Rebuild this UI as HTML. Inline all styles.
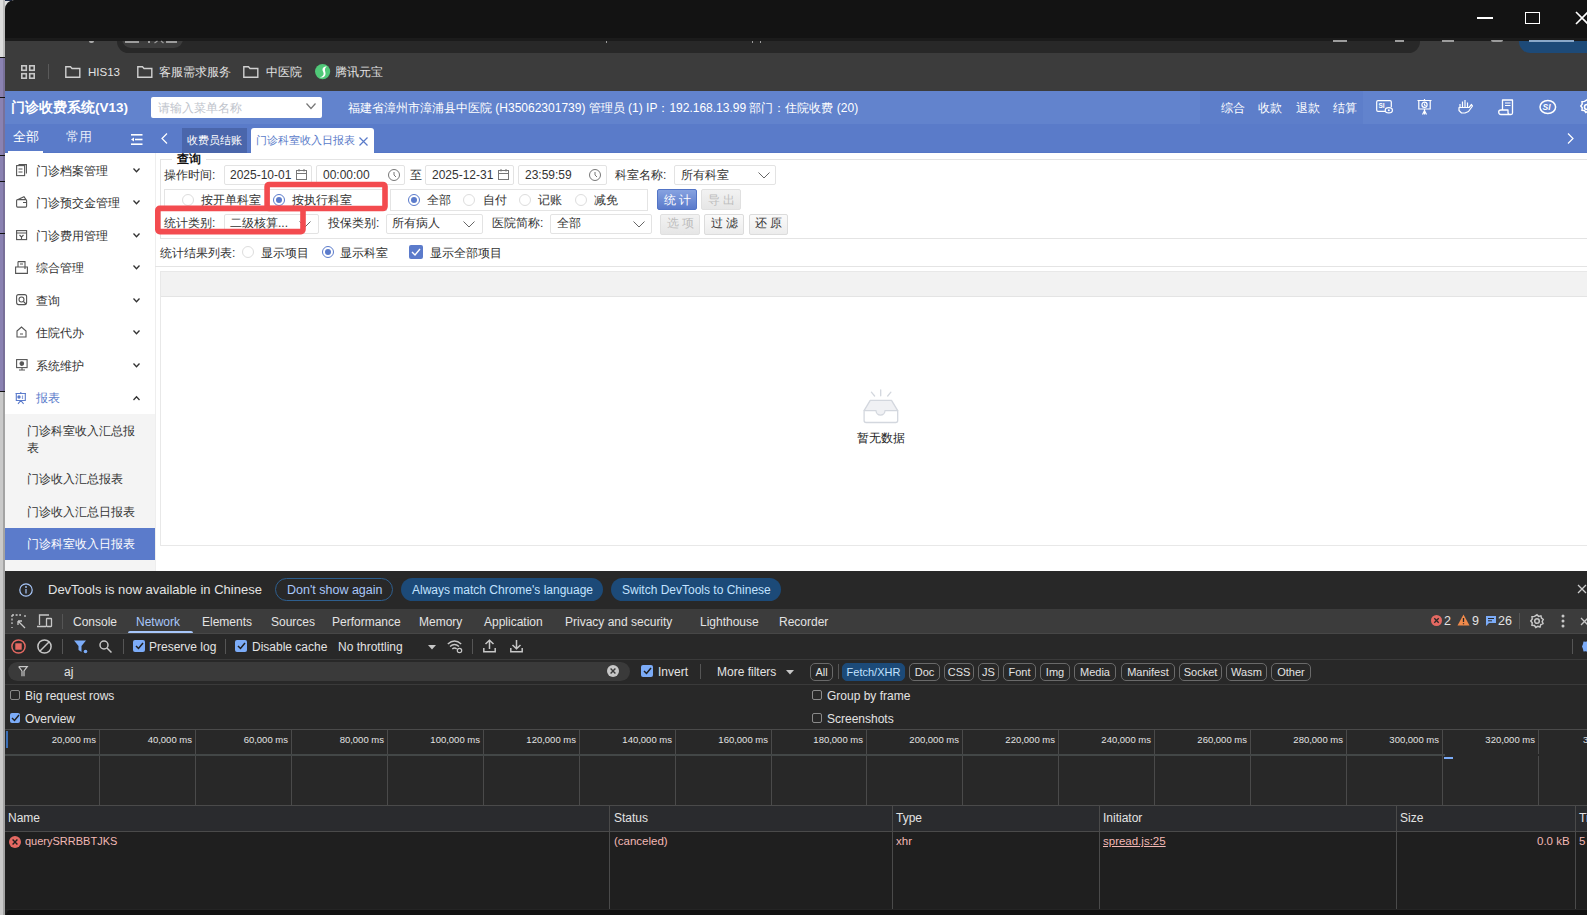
<!DOCTYPE html>
<html><head><meta charset="utf-8">
<style>
*{margin:0;padding:0;box-sizing:border-box}
html,body{width:1587px;height:915px;overflow:hidden;background:#1f1f1f;font-family:"Liberation Sans",sans-serif;position:relative}
.a{position:absolute}
.t{position:absolute;white-space:nowrap;line-height:1}
svg{position:absolute;overflow:visible}
.bm{color:#e3e3e3;font-size:11.5px;top:67px}
.hd{color:#fff;font-size:12px;top:102px}
.sb{color:#333;font-size:12px}
.lab{color:#333;font-size:12px}
.inp{position:absolute;background:#fff;border:1px solid #e3e3e3;border-radius:2px}
.dv{color:#e3e3e3;font-size:12px}
.chip{position:absolute;top:663px;height:18px;border:1px solid #6a6a6a;border-radius:5px;color:#e3e3e3;font-size:11px;line-height:16px;text-align:center}
.vl{position:absolute;width:1px;background:#4a4a4a}
</style></head><body>
<!-- left strip -->
<div class="a" style="left:0;top:0;width:20px;height:20px;background:#dedede"></div>
<div class="a" style="left:0;top:0;width:12px;height:1px;background:#1e2b48"></div>
<div class="a" style="left:0;top:0;width:5px;height:57px;background:#dcdcdc"></div>
<div class="a" style="left:3px;top:0;width:2px;height:57px;background:#bdbdbd"></div>
<div class="a" style="left:0;top:57px;width:5px;height:334px;background:#8a82b2"></div>
<div class="a" style="left:3px;top:57px;width:2px;height:334px;background:#787099"></div>
<div class="a" style="left:0;top:57px;width:5px;height:1px;background:#111"></div>
<div class="a" style="left:0;top:97px;width:5px;height:1px;background:#111"></div>
<div class="a" style="left:0;top:155px;width:5px;height:1px;background:#111"></div>
<div class="a" style="left:0;top:181px;width:5px;height:1px;background:#111"></div>
<div class="a" style="left:0;top:233px;width:5px;height:1px;background:#111"></div>
<div class="a" style="left:0;top:391px;width:5px;height:1px;background:#111"></div>
<div class="a" style="left:0;top:392px;width:5px;height:523px;background:#c9c9c9"></div>
<div class="a" style="left:3px;top:392px;width:2px;height:523px;background:#a3a3a3"></div>
<!-- address row -->
<div class="a" style="left:5px;top:38px;width:1582px;height:53px;background:#3c3c3c"></div>
<div class="a" style="left:117px;top:30px;width:1303px;height:23px;background:#282828;border-radius:12px"></div>
<div class="a" style="left:122px;top:30px;width:61px;height:18px;background:#3c3c3c;border-radius:9px"></div>
<div class="a" style="left:1519px;top:30px;width:80px;height:23px;background:#1d4a78;border-radius:12px"></div>
<!-- title bar -->
<div class="a" style="left:5px;top:0;width:1582px;height:38px;background:#131313;border-top-left-radius:9px"></div>
<div class="a" style="left:5px;top:38px;width:1582px;height:3px;background:#1b1b1b"></div>
<div class="a" style="left:1477px;top:17px;width:16px;height:2px;background:#fff"></div>
<div class="a" style="left:1525px;top:12px;width:15px;height:12px;border:1.6px solid #fff"></div>
<svg style="left:1575px;top:11px" width="14" height="14"><path d="M1 1 L13 13 M13 1 L1 13" stroke="#fff" stroke-width="1.6"/></svg>
<!-- address fragments -->
<div class="a" style="left:125px;top:41px;width:14px;height:1.5px;background:#9c9c9c"></div>
<div class="a" style="left:148px;top:41px;width:2px;height:2px;background:#9c9c9c"></div>
<svg style="left:154px;top:40px" width="12" height="4"><path d="M0.5 3 L3.5 1 M7 1 L9.5 3" stroke="#9c9c9c" stroke-width="1.2"/></svg>
<div class="a" style="left:166px;top:41px;width:11px;height:1.5px;background:#9c9c9c"></div>
<div class="a" style="left:89px;top:41px;width:5px;height:2px;background:#aaa;border-radius:0 0 3px 3px"></div>
<div class="a" style="left:606px;top:41px;width:1px;height:2px;background:#9c9c9c"></div>
<div class="a" style="left:752px;top:41px;width:1px;height:2px;background:#9c9c9c"></div>
<div class="a" style="left:760px;top:41px;width:1px;height:2px;background:#9c9c9c"></div>
<div class="a" style="left:1333px;top:40px;width:14px;height:2px;background:#9c9c9c"></div>
<div class="a" style="left:1395px;top:40px;width:9px;height:2px;background:#9c9c9c"></div>
<div class="a" style="left:1442px;top:40px;width:12px;height:2px;background:#9c9c9c"></div>
<div class="a" style="left:1491px;top:40px;width:12px;height:2px;background:#9c9c9c;border-radius:0 0 6px 6px"></div>
<div class="a" style="left:1529px;top:40px;width:45px;height:2px;background:#8aa8c8"></div>
<!-- bookmarks -->
<svg style="left:21px;top:65px" width="14" height="14"><g fill="none" stroke="#c8c8c8" stroke-width="1.6"><rect x="0.8" y="0.8" width="4.5" height="4.5"/><rect x="8.7" y="0.8" width="4.5" height="4.5"/><rect x="0.8" y="8.7" width="4.5" height="4.5"/><rect x="8.7" y="8.7" width="4.5" height="4.5"/></g></svg>
<div class="a" style="left:48px;top:64px;width:1px;height:15px;background:#5a5a5a"></div>
<svg style="left:65px;top:66px" width="16" height="12"><path d="M0.8 0.8 H5.5 L7 2.5 H14.8 V11.2 H0.8 Z" fill="none" stroke="#d0d0d0" stroke-width="1.4"/></svg>
<div class="t bm" style="left:88px">HIS13</div>
<svg style="left:137px;top:66px" width="16" height="12"><path d="M0.8 0.8 H5.5 L7 2.5 H14.8 V11.2 H0.8 Z" fill="none" stroke="#d0d0d0" stroke-width="1.4"/></svg>
<div class="t bm" style="left:159px">客服需求服务</div>
<svg style="left:243px;top:66px" width="16" height="12"><path d="M0.8 0.8 H5.5 L7 2.5 H14.8 V11.2 H0.8 Z" fill="none" stroke="#d0d0d0" stroke-width="1.4"/></svg>
<div class="t bm" style="left:266px">中医院</div>
<svg style="left:315px;top:64px" width="16" height="16"><circle cx="7.6" cy="7.6" r="7.6" fill="#50c878"/><path d="M12 2.6 C8.2 2.2 6.6 5 8 7.6 C9.4 10.2 8.6 12.6 4.6 13.4 C8.4 14.4 11.4 11.6 10.3 8 C9.6 5.6 9.8 3.6 12 2.6Z" fill="#fff"/></svg>
<div class="t bm" style="left:335px">腾讯元宝</div>

<!-- app header -->
<div class="a" style="left:5px;top:91px;width:1582px;height:33px;background:#6283cd"></div>
<div class="a" style="left:1200px;top:91px;width:163px;height:33px;background:#5d7eca"></div>
<div class="a" style="left:5px;top:124px;width:1582px;height:29px;background:#5a7bc9"></div><div class="a" style="left:5px;top:152px;width:1582px;height:1px;background:#5576c6"></div>
<div class="t" style="left:11px;top:101px;color:#fff;font-size:13.5px;font-weight:bold">门诊收费系统(V13)</div>
<div class="a" style="left:151px;top:97px;width:171px;height:21px;background:#fff;border-radius:2px"></div>
<div class="t" style="left:158px;top:102px;color:#c0c4cc;font-size:12px">请输入菜单名称</div>
<svg style="left:306px;top:103px" width="10" height="7"><path d="M0.5 0.5 L5 5.5 L9.5 0.5" fill="none" stroke="#777" stroke-width="1.2"/></svg>
<div class="t hd" style="left:348px;font-size:12px">福建省漳州市漳浦县中医院 (H35062301739) 管理员 (1) IP：192.168.13.99 部门：住院收费 (20)</div>
<div class="t hd" style="left:1221px">综合</div>
<div class="t hd" style="left:1258px">收款</div>
<div class="t hd" style="left:1296px">退款</div>
<div class="t hd" style="left:1333px">结算</div>
<!-- header icons -->
<svg style="left:1376px;top:100px" width="18" height="14"><g fill="none" stroke="#fff" stroke-width="1.2"><path d="M9 11.3 H2 Q0.7 11.3 0.7 10 V2 Q0.7 0.7 2 0.7 H14 Q15.3 0.7 15.3 2 V7"/><ellipse cx="12.8" cy="10.3" rx="3.6" ry="2.6" fill="#6283cd"/><circle cx="12.8" cy="10.3" r="1" fill="#fff" stroke="none"/></g><text x="2.5" y="7.5" font-size="6.5" font-weight="bold" fill="#fff" font-family="Liberation Sans">SI</text></svg>
<svg style="left:1417px;top:99px" width="15" height="16"><g fill="none" stroke="#fff" stroke-width="1.2"><path d="M0.5 1.5 H14.5 M7.5 0 V1.5 M1.8 1.5 V10 H13.2 V1.5"/><circle cx="7.5" cy="5.8" r="2.6"/><path d="M7.5 4.5 V6 L8.6 6.8 M7.5 10 V15.5 M5.5 15.5 L7.5 11.5 L9.5 15.5"/></g></svg>
<svg style="left:1458px;top:99px" width="16" height="16"><g fill="none" stroke="#fff" stroke-width="1.2" stroke-linejoin="round"><path d="M2 8 V5 M4.5 8 V2.5 M7 8 V1 M9.5 8 V3.5"/><path d="M1 8.5 H11 L13.5 5.5 L14.5 7 L10.5 12.5 L7 14 H3.5 L1 11.5 Z"/></g></svg>
<svg style="left:1498px;top:99px" width="16" height="17"><g fill="none" stroke="#fff" stroke-width="1.3" stroke-linejoin="round"><path d="M4.5 11 V1 H14.5 V14 Q14.5 15.5 13 15.5 H3 Q0.7 15.5 0.7 13 Q0.7 11 3 11 H10 V13.5 Q10 15.5 12 15.5"/><path d="M7 4 H12.5 M7 6.5 H12.5" stroke-width="1.1"/></g></svg>
<svg style="left:1539px;top:99px" width="18" height="16"><ellipse cx="8.8" cy="8" rx="7.8" ry="6.6" fill="none" stroke="#fff" stroke-width="1.5"/><text x="3.6" y="11.2" font-size="8.5" font-weight="bold" fill="#fff" font-family="Liberation Sans" font-style="italic">SI</text></svg>
<svg style="left:1579px;top:99px" width="16" height="16"><g fill="none" stroke="#fff" stroke-width="1.5"><circle cx="8" cy="8" r="2.5"/><path d="M8 0.8 L9.6 2.4 L11.9 1.8 L12.5 4.1 L14.2 5.5 L13.2 7.5 L14 9.7 L11.8 10.6 L11 13 L8.8 12.3 L6.8 13.5 L5.5 11.5 L3 11.3 L3.2 8.8 L1.8 7 L3.2 5.1 L3 2.7 L5.5 2.4 Z"/></g></svg>
<!-- tabs row -->
<div class="t" style="left:13px;top:131px;color:#fff;font-size:12.5px">全部</div>
<div class="t" style="left:66px;top:131px;color:#e6ecf8;font-size:12.5px">常用</div>
<div class="a" style="left:8px;top:151px;width:35px;height:2px;background:#fff"></div>
<svg style="left:131px;top:134px" width="13" height="12"><g fill="#fff"><rect x="0" y="0" width="11.5" height="1.6"/><rect x="4" y="4.7" width="7.5" height="1.6"/><rect x="0" y="9.4" width="11.5" height="1.6"/><path d="M0 5.5 L3 3.5 V7.5Z"/></g></svg>
<svg style="left:161px;top:133px" width="7" height="11"><path d="M6 0.5 L1 5.5 L6 10.5" fill="none" stroke="#fff" stroke-width="1.2"/></svg>
<div class="a" style="left:182px;top:128px;width:65px;height:25px;background:#4a66ab"></div>
<div class="t" style="left:187px;top:135px;color:#fff;font-size:11px">收费员结账</div>
<div class="a" style="left:251px;top:128px;width:123px;height:26px;background:#fff;border-radius:3px 3px 0 0"></div>
<div class="t" style="left:256px;top:135px;color:#5a7bc9;font-size:11px">门诊科室收入日报表</div>
<svg style="left:359px;top:137px" width="9" height="9"><path d="M0.5 0.5 L8.5 8.5 M8.5 0.5 L0.5 8.5" stroke="#5a7bc9" stroke-width="1.2"/></svg>
<svg style="left:1567px;top:133px" width="7" height="11"><path d="M1 0.5 L6 5.5 L1 10.5" fill="none" stroke="#fff" stroke-width="1.2"/></svg>
<!-- content -->
<div class="a" style="left:5px;top:153px;width:1582px;height:418px;background:#fff"></div>
<!-- sidebar -->
<div class="a" style="left:5px;top:414px;width:150px;height:114px;background:#f4f4f4"></div>
<div class="a" style="left:5px;top:528px;width:150px;height:32px;background:#5b7bcb"></div>
<div class="a" style="left:5px;top:560px;width:150px;height:11px;background:#f4f4f4"></div>
<!-- sidebar items -->
<svg style="left:16px;top:164px" width="11" height="12"><g fill="none" stroke="#555" stroke-width="1.1"><rect x="0.6" y="1.6" width="8" height="10"/><path d="M2.5 0.6 H10.4 V9.5 M2.5 5 H6.5 M2.5 8 H6.5"/></g></svg>
<div class="t sb" style="left:36px;top:165px">门诊档案管理</div>
<svg style="left:16px;top:196px" width="12" height="12"><g fill="none" stroke="#555" stroke-width="1.1"><rect x="0.6" y="3.6" width="10" height="7.5" rx="1"/><path d="M2 3.5 L8 0.8 L10 3.5 M7 6.5 H11"/></g></svg>
<div class="t sb" style="left:36px;top:197px">门诊预交金管理</div>
<svg style="left:16px;top:229px" width="11" height="12"><g fill="none" stroke="#555" stroke-width="1.1"><rect x="0.6" y="1.6" width="10" height="9"/><path d="M0.6 4 H10.6 M3.5 6 L5.5 8 L7.5 6 M5.5 8 V10"/></g></svg>
<div class="t sb" style="left:36px;top:230px">门诊费用管理</div>
<svg style="left:15px;top:261px" width="13" height="13"><g fill="none" stroke="#555" stroke-width="1.1"><path d="M3 0.6 H10 V8 M3 0.6 V6 M0.6 6 H12.4 V12.4 H0.6 Z M5 3 H8"/></g></svg>
<div class="t sb" style="left:36px;top:262px">综合管理</div>
<svg style="left:16px;top:294px" width="12" height="12"><g fill="none" stroke="#555" stroke-width="1.1"><rect x="0.6" y="0.6" width="10" height="10" rx="2"/><circle cx="5.5" cy="5.5" r="2.5"/><path d="M7.5 7.5 L10 10"/></g></svg>
<div class="t sb" style="left:36px;top:295px">查询</div>
<svg style="left:16px;top:326px" width="12" height="12"><g fill="none" stroke="#555" stroke-width="1.1"><path d="M1 5 L5.5 1 L10 5 V11 H1 Z M4 8 H7"/></g></svg>
<div class="t sb" style="left:36px;top:327px">住院代办</div>
<svg style="left:16px;top:359px" width="12" height="12"><g fill="none" stroke="#555" stroke-width="1.1"><rect x="0.6" y="0.6" width="10.5" height="8"/><path d="M3 11 H9 M6 9 V11"/><circle cx="5.8" cy="4.6" r="1.8" fill="#555"/></g></svg>
<div class="t sb" style="left:36px;top:360px">系统维护</div>
<svg style="left:15px;top:392px" width="12" height="13"><g fill="none" stroke="#5b7bcb" stroke-width="1.1"><path d="M0.5 1.5 H11 M5.8 0 V1.5 M1.3 1.5 V8.5 H10.3 V1.5 M5.8 8.5 L3 11.8 M5.8 8.5 L8.6 11.8"/></g><circle cx="4" cy="5" r="1.7" fill="#5b7bcb"/><path d="M7.5 3.5 V7" stroke="#8da3dc" stroke-width="1.2"/></svg>
<div class="t sb" style="left:36px;top:392px;color:#5b7bcb">报表</div>
<svg style="left:133px;top:168px" width="7" height="5"><path d="M0.5 0.5 L3.5 3.8 L6.5 0.5" fill="none" stroke="#333" stroke-width="1.3"/></svg>
<svg style="left:133px;top:200px" width="7" height="5"><path d="M0.5 0.5 L3.5 3.8 L6.5 0.5" fill="none" stroke="#333" stroke-width="1.3"/></svg>
<svg style="left:133px;top:233px" width="7" height="5"><path d="M0.5 0.5 L3.5 3.8 L6.5 0.5" fill="none" stroke="#333" stroke-width="1.3"/></svg>
<svg style="left:133px;top:265px" width="7" height="5"><path d="M0.5 0.5 L3.5 3.8 L6.5 0.5" fill="none" stroke="#333" stroke-width="1.3"/></svg>
<svg style="left:133px;top:298px" width="7" height="5"><path d="M0.5 0.5 L3.5 3.8 L6.5 0.5" fill="none" stroke="#333" stroke-width="1.3"/></svg>
<svg style="left:133px;top:330px" width="7" height="5"><path d="M0.5 0.5 L3.5 3.8 L6.5 0.5" fill="none" stroke="#333" stroke-width="1.3"/></svg>
<svg style="left:133px;top:363px" width="7" height="5"><path d="M0.5 0.5 L3.5 3.8 L6.5 0.5" fill="none" stroke="#333" stroke-width="1.3"/></svg>
<svg style="left:133px;top:396px" width="7" height="5"><path d="M0.5 4 L3.5 0.7 L6.5 4" fill="none" stroke="#333" stroke-width="1.3"/></svg>
<div class="t sb" style="left:27px;top:423px;font-size:12px;line-height:16.5px">门诊科室收入汇总报<br>表</div>
<div class="t sb" style="left:27px;top:473px;font-size:12px">门诊收入汇总报表</div>
<div class="t sb" style="left:27px;top:506px;font-size:12px">门诊收入汇总日报表</div>
<div class="t sb" style="left:27px;top:538px;font-size:12px;color:#fff">门诊科室收入日报表</div>

<!-- panel border -->
<div class="a" style="left:155px;top:153px;width:1px;height:418px;background:#eeeeee"></div>
<!-- fieldset -->
<div class="a" style="left:160px;top:159px;width:1427px;height:80px;border:1px solid #e4e4e4;border-right:none"></div>
<div class="a" style="left:172px;top:153px;width:34px;height:12px;background:#fff"></div>
<div class="t" style="left:177px;top:153px;color:#111;font-size:12px;font-weight:bold">查询</div>

<!-- row1 -->
<div class="t lab" style="left:164px;top:169px">操作时间:</div>
<div class="inp" style="left:224px;top:165px;width:88px;height:20px"></div>
<div class="t lab" style="left:230px;top:169px">2025-10-01</div>
<svg style="left:296px;top:169px" width="11" height="11"><g fill="none" stroke="#777" stroke-width="1"><rect x="0.5" y="1.5" width="10" height="9"/><path d="M0.5 4.5 H10.5 M3 0 V2.5 M8 0 V2.5"/></g></svg>
<div class="inp" style="left:316px;top:165px;width:89px;height:20px"></div>
<div class="t lab" style="left:323px;top:169px">00:00:00</div>
<svg style="left:388px;top:169px" width="12" height="12"><g fill="none" stroke="#777" stroke-width="1"><circle cx="6" cy="6" r="5.5"/><path d="M6 3 V6 L8 8"/></g></svg>
<div class="t lab" style="left:410px;top:169px">至</div>
<div class="inp" style="left:425px;top:165px;width:89px;height:20px"></div>
<div class="t lab" style="left:432px;top:169px">2025-12-31</div>
<svg style="left:498px;top:169px" width="11" height="11"><g fill="none" stroke="#777" stroke-width="1"><rect x="0.5" y="1.5" width="10" height="9"/><path d="M0.5 4.5 H10.5 M3 0 V2.5 M8 0 V2.5"/></g></svg>
<div class="inp" style="left:518px;top:165px;width:89px;height:20px"></div>
<div class="t lab" style="left:525px;top:169px">23:59:59</div>
<svg style="left:589px;top:169px" width="12" height="12"><g fill="none" stroke="#777" stroke-width="1"><circle cx="6" cy="6" r="5.5"/><path d="M6 3 V6 L8 8"/></g></svg>
<div class="t lab" style="left:615px;top:169px">科室名称:</div>
<div class="inp" style="left:674px;top:165px;width:102px;height:20px"></div>
<div class="t lab" style="left:681px;top:169px">所有科室</div>
<svg style="left:758px;top:172px" width="12" height="7"><path d="M0.5 0.5 L6 6 L11.5 0.5" fill="none" stroke="#666" stroke-width="1"/></svg>

<!-- row2 -->
<div class="a" style="left:164px;top:189px;width:223px;height:22px;border:1px solid #e4e4e4"></div>
<div class="a" style="left:390px;top:189px;width:258px;height:22px;border:1px solid #e4e4e4"></div>
<div class="a" style="left:182px;top:194px;width:12px;height:12px;border:1px solid #ddd;border-radius:50%"></div>
<div class="t lab" style="left:201px;top:194px">按开单科室</div>
<div class="a" style="left:273px;top:194px;width:12px;height:12px;border:1px solid #5b7bcb;border-radius:50%"></div>
<div class="a" style="left:276px;top:197px;width:6px;height:6px;background:#5b7bcb;border-radius:50%"></div>
<div class="t lab" style="left:292px;top:194px">按执行科室</div>
<div class="a" style="left:408px;top:194px;width:12px;height:12px;border:1px solid #5b7bcb;border-radius:50%"></div>
<div class="a" style="left:411px;top:197px;width:6px;height:6px;background:#5b7bcb;border-radius:50%"></div>
<div class="t lab" style="left:427px;top:194px">全部</div>
<div class="a" style="left:463px;top:194px;width:12px;height:12px;border:1px solid #ddd;border-radius:50%"></div>
<div class="t lab" style="left:483px;top:194px">自付</div>
<div class="a" style="left:519px;top:194px;width:12px;height:12px;border:1px solid #ddd;border-radius:50%"></div>
<div class="t lab" style="left:538px;top:194px">记账</div>
<div class="a" style="left:575px;top:194px;width:12px;height:12px;border:1px solid #ddd;border-radius:50%"></div>
<div class="t lab" style="left:594px;top:194px">减免</div>
<div class="a" style="left:657px;top:189px;width:40px;height:21px;background:linear-gradient(#86a2e0,#5a7acb);border:1px solid #5274c6;border-radius:2px"></div>
<div class="t" style="left:664px;top:194px;color:#fff;font-size:12px;letter-spacing:3px">统计</div>
<div class="a" style="left:701px;top:189px;width:40px;height:21px;background:linear-gradient(#f2f2f2,#e6e6e6);border:1px solid #e0e0e0;border-radius:2px"></div>
<div class="t" style="left:708px;top:194px;color:#bdbdbd;font-size:12px;letter-spacing:3px">导出</div>

<!-- row3 -->
<div class="t lab" style="left:164px;top:217px">统计类别:</div>
<div class="inp" style="left:224px;top:214px;width:95px;height:20px"></div>
<div class="t lab" style="left:230px;top:217px">二级核算...</div>
<svg style="left:299px;top:221px" width="12" height="7"><path d="M0.5 0.5 L6 6 L11.5 0.5" fill="none" stroke="#666" stroke-width="1"/></svg>
<div class="t lab" style="left:328px;top:217px">投保类别:</div>
<div class="inp" style="left:386px;top:214px;width:97px;height:20px"></div>
<div class="t lab" style="left:392px;top:217px">所有病人</div>
<svg style="left:463px;top:221px" width="12" height="7"><path d="M0.5 0.5 L6 6 L11.5 0.5" fill="none" stroke="#666" stroke-width="1"/></svg>
<div class="t lab" style="left:492px;top:217px">医院简称:</div>
<div class="inp" style="left:550px;top:214px;width:102px;height:20px"></div>
<div class="t lab" style="left:557px;top:217px">全部</div>
<svg style="left:633px;top:221px" width="12" height="7"><path d="M0.5 0.5 L6 6 L11.5 0.5" fill="none" stroke="#666" stroke-width="1"/></svg>
<div class="a" style="left:660px;top:214px;width:40px;height:21px;background:linear-gradient(#f2f2f2,#e6e6e6);border:1px solid #e0e0e0;border-radius:2px"></div>
<div class="t" style="left:667px;top:217px;color:#bdbdbd;font-size:12px;letter-spacing:3px">选项</div>
<div class="a" style="left:704px;top:214px;width:40px;height:21px;background:linear-gradient(#fafafa,#ececec);border:1px solid #dcdcdc;border-radius:2px"></div>
<div class="t" style="left:711px;top:217px;color:#333;font-size:12px;letter-spacing:3px">过滤</div>
<div class="a" style="left:749px;top:214px;width:39px;height:21px;background:linear-gradient(#fafafa,#ececec);border:1px solid #dcdcdc;border-radius:2px"></div>
<div class="t" style="left:755px;top:217px;color:#333;font-size:12px;letter-spacing:3px">还原</div>

<!-- red boxes -->
<svg style="left:0;top:0" width="400" height="240"><g fill="none" stroke="#f34b4f" stroke-width="5.6"><rect x="267.1" y="184.5" width="117.9" height="24" rx="2"/><rect x="157.8" y="208.4" width="145.2" height="23.2" rx="2"/></g></svg>


<!-- row4 -->
<div class="t lab" style="left:160px;top:247px">统计结果列表:</div>
<div class="a" style="left:242px;top:246px;width:12px;height:12px;border:1px solid #ddd;border-radius:50%"></div>
<div class="t lab" style="left:261px;top:247px">显示项目</div>
<div class="a" style="left:322px;top:246px;width:12px;height:12px;border:1px solid #5b7bcb;border-radius:50%"></div>
<div class="a" style="left:325px;top:249px;width:6px;height:6px;background:#5b7bcb;border-radius:50%"></div>
<div class="t lab" style="left:340px;top:247px">显示科室</div>
<div class="a" style="left:409px;top:245px;width:14px;height:14px;background:#5b7bcb;border-radius:2px"></div>
<svg style="left:411px;top:248px" width="10" height="8"><path d="M1 4 L4 7 L9 1" fill="none" stroke="#fff" stroke-width="1.4"/></svg>
<div class="t lab" style="left:430px;top:247px">显示全部项目</div>
<div class="a" style="left:155px;top:266px;width:1432px;height:1px;background:#e4e4e4"></div>

<!-- table -->
<div class="a" style="left:160px;top:271px;width:1427px;height:275px;border:1px solid #e8e8e8;border-right:none"></div>
<div class="a" style="left:161px;top:272px;width:1426px;height:25px;background:#f2f2f2;border-bottom:1px solid #e4e4e4"></div>
<svg style="left:863px;top:389px" width="36" height="35"><g stroke="#d3d7de" stroke-width="1.3" stroke-linecap="round"><path d="M17.7 0.8 V6.8 M8.4 3.2 L11.6 7 M27.9 3.2 L24.7 7" fill="none"/><path d="M7.2 11.3 H28.5 L34.7 21.6 H22 A4.5 4.5 0 0 1 13 21.6 H1.1 Z" fill="#f0f1f4" stroke-linejoin="round"/><path d="M1.1 21.6 V31.5 Q1.1 33.5 3.1 33.5 H32.7 Q34.7 33.5 34.7 31.5 V21.6" fill="none"/></g></svg>
<div class="t" style="left:857px;top:432px;color:#222;font-size:12px">暂无数据</div>
<!-- devtools -->
<div class="a" style="left:5px;top:571px;width:1582px;height:344px;background:#282828"></div>
<!-- infobar -->
<svg style="left:19px;top:583px" width="14" height="14"><g fill="none" stroke="#a8c7fa" stroke-width="1.2"><circle cx="7" cy="7" r="6.2"/><path d="M7 6 V10.5"/></g><circle cx="7" cy="4" r="0.9" fill="#a8c7fa"/></svg>
<div class="t dv" style="left:48px;top:583px;font-size:13px">DevTools is now available in Chinese</div>
<div class="a" style="left:275px;top:578px;width:118px;height:23px;border:1px solid #2e5f8f;border-radius:12px"></div>
<div class="t" style="left:287px;top:584px;color:#a8c7fa;font-size:12.5px">Don't show again</div>
<div class="a" style="left:401px;top:578px;width:202px;height:23px;background:#1c4a78;border-radius:12px"></div>
<div class="t" style="left:412px;top:584px;color:#c2e2ff;font-size:12px">Always match Chrome's language</div>
<div class="a" style="left:611px;top:578px;width:170px;height:23px;background:#1c4a78;border-radius:12px"></div>
<div class="t" style="left:622px;top:584px;color:#c2e2ff;font-size:12px">Switch DevTools to Chinese</div>
<svg style="left:1577px;top:584px" width="10" height="10"><path d="M1 1 L9 9 M9 1 L1 9" stroke="#ccc" stroke-width="1.3"/></svg>

<!-- tab strip -->
<div class="a" style="left:5px;top:609px;width:1582px;height:25px;background:#3c3c3c"></div>
<svg style="left:11px;top:614px" width="15" height="15"><g fill="none" stroke="#c7c7c7" stroke-width="1.3"><path d="M1 1 H10 M1 1 V10 M1 13 V14 M14 1 V4" stroke-dasharray="2 1.6"/><path d="M7 7 L14 14 M7 7 H11 M7 7 V11"/></g></svg>
<svg style="left:37px;top:614px" width="16" height="14"><g fill="none" stroke="#c7c7c7" stroke-width="1.3"><path d="M2.5 11 V1 H12 M0 12.5 H9"/><rect x="9.5" y="4.5" width="5" height="8" rx="0.5"/></g></svg>
<div class="a" style="left:62px;top:614px;width:1px;height:15px;background:#555"></div>
<div class="t dv" style="left:73px;top:616px">Console</div>
<div class="t" style="left:136px;top:616px;color:#a8c7fa;font-size:12px">Network</div>
<div class="a" style="left:128px;top:631px;width:65px;height:2px;background:#a8c7fa;border-radius:2px 2px 0 0"></div>
<div class="t dv" style="left:202px;top:616px">Elements</div>
<div class="t dv" style="left:271px;top:616px">Sources</div>
<div class="t dv" style="left:332px;top:616px">Performance</div>
<div class="t dv" style="left:419px;top:616px">Memory</div>
<div class="t dv" style="left:484px;top:616px">Application</div>
<div class="t dv" style="left:565px;top:616px">Privacy and security</div>
<div class="t dv" style="left:700px;top:616px">Lighthouse</div>
<div class="t dv" style="left:779px;top:616px">Recorder</div>
<svg style="left:1431px;top:615px" width="11" height="11"><circle cx="5.5" cy="5.5" r="5.5" fill="#e46962"/><path d="M3.3 3.3 L7.7 7.7 M7.7 3.3 L3.3 7.7" stroke="#282828" stroke-width="1.3"/></svg>
<div class="t dv" style="left:1444px;top:615px;font-size:12.5px">2</div>
<svg style="left:1457px;top:614px" width="13" height="12"><path d="M6.5 0.5 L12.5 11.5 H0.5 Z" fill="#f08a4b"/><path d="M6.5 4 V8 M6.5 9.3 V10.3" stroke="#282828" stroke-width="1.3"/></svg>
<div class="t dv" style="left:1472px;top:615px;font-size:12.5px">9</div>
<svg style="left:1486px;top:616px" width="10" height="10"><path d="M0 0 H10 V7 H3 L0 10 Z" fill="#7cacf8"/><path d="M2 2.5 H8 M2 4.8 H6" stroke="#282828" stroke-width="1"/></svg>
<div class="t dv" style="left:1498px;top:615px;font-size:12.5px">26</div>
<div class="a" style="left:1519px;top:613px;width:1px;height:16px;background:#555"></div>
<svg style="left:1530px;top:614px" width="14" height="14"><g fill="none" stroke="#c7c7c7" stroke-width="1.5"><circle cx="7" cy="7" r="2.3"/><path d="M7 0.8 L8.6 2.4 L10.9 1.8 L11.5 4.1 L13.2 5.5 L12.2 7.5 L13 9.7 L10.8 10.6 L10 13 L7.8 12.3 L5.8 13.5 L4.5 11.5 L2 11.3 L2.2 8.8 L0.8 7 L2.2 5.1 L2 2.7 L4.5 2.4 Z"/></g></svg>
<svg style="left:1561px;top:614px" width="4" height="14"><g fill="#c7c7c7"><circle cx="2" cy="2" r="1.5"/><circle cx="2" cy="7" r="1.5"/><circle cx="2" cy="12" r="1.5"/></g></svg>
<svg style="left:1580px;top:617px" width="9" height="9"><path d="M1 1 L8 8 M8 1 L1 8" stroke="#c7c7c7" stroke-width="1.3"/></svg>

<!-- toolbar -->
<div class="a" style="left:5px;top:633px;width:1582px;height:1px;background:#474747"></div>
<svg style="left:11px;top:639px" width="15" height="15"><circle cx="7.5" cy="7.5" r="6.6" fill="none" stroke="#e46962" stroke-width="1.5"/><rect x="4.3" y="4.3" width="6.4" height="6.4" fill="#e46962"/></svg>
<svg style="left:37px;top:639px" width="15" height="15"><g fill="none" stroke="#c7c7c7" stroke-width="1.5"><circle cx="7.5" cy="7.5" r="6.6"/><path d="M3 12 L12 3"/></g></svg>
<div class="a" style="left:62px;top:639px;width:1px;height:15px;background:#555"></div>
<svg style="left:74px;top:640px" width="14" height="14"><path d="M0 0.5 H12 L7.5 6 V12 L4.5 10 V6 Z" fill="#7cacf8"/><circle cx="11.5" cy="11.5" r="1.8" fill="#7cacf8"/></svg>
<svg style="left:99px;top:640px" width="14" height="14"><g fill="none" stroke="#c7c7c7" stroke-width="1.5"><circle cx="5" cy="5" r="4"/><path d="M8 8 L12.5 12.5"/></g></svg>
<div class="a" style="left:123px;top:639px;width:1px;height:15px;background:#555"></div>
<div class="a" style="left:133px;top:640px;width:12px;height:12px;background:#7cacf8;border-radius:2px"></div>
<svg style="left:135px;top:642px" width="9" height="8"><path d="M1 4 L3.5 6.5 L8 1" fill="none" stroke="#1f1f1f" stroke-width="1.5"/></svg>
<div class="t dv" style="left:149px;top:641px">Preserve log</div>
<div class="a" style="left:225px;top:639px;width:1px;height:15px;background:#555"></div>
<div class="a" style="left:235px;top:640px;width:12px;height:12px;background:#7cacf8;border-radius:2px"></div>
<svg style="left:237px;top:642px" width="9" height="8"><path d="M1 4 L3.5 6.5 L8 1" fill="none" stroke="#1f1f1f" stroke-width="1.5"/></svg>
<div class="t dv" style="left:252px;top:641px">Disable cache</div>
<div class="t dv" style="left:338px;top:641px">No throttling</div>
<svg style="left:428px;top:645px" width="8" height="5"><path d="M0 0 H8 L4 4.5 Z" fill="#c7c7c7"/></svg>
<svg style="left:447px;top:639px" width="16" height="14"><g fill="none" stroke="#c7c7c7" stroke-width="1.4"><path d="M0.8 5 Q7.5 -1 14.2 5 M3 7.5 Q7.5 3.5 12 7.5 M5.3 10 Q7.5 8 9.7 10"/></g><circle cx="12.5" cy="11.5" r="2.2" fill="none" stroke="#c7c7c7" stroke-width="1.2"/></svg>
<div class="a" style="left:472px;top:639px;width:1px;height:15px;background:#555"></div>
<svg style="left:483px;top:639px" width="13" height="14"><g fill="none" stroke="#c7c7c7" stroke-width="1.5"><path d="M6.5 10 V1.5 M2.5 5 L6.5 1.2 L10.5 5 M0.8 9 V12.8 H12.2 V9"/></g></svg>
<svg style="left:510px;top:639px" width="13" height="14"><g fill="none" stroke="#c7c7c7" stroke-width="1.5"><path d="M6.5 1 V9.5 M2.5 6 L6.5 9.8 L10.5 6 M0.8 9 V12.8 H12.2 V9"/></g></svg>
<div class="a" style="left:1572px;top:639px;width:1px;height:15px;background:#555"></div>
<svg style="left:1582px;top:640px" width="12" height="13"><path d="M6 0.5 L8 1.8 L10.5 1.5 L11 4 L12 6.5 L11 9 L10.5 11.5 L8 11.2 L6 12.5 L4 11.2 L1.5 11.5 L1 9 L0 6.5 L1 4 L1.5 1.5 L4 1.8 Z" fill="#7cacf8"/></svg>

<!-- filter row -->
<div class="a" style="left:5px;top:659px;width:1582px;height:1px;background:#3a3a3a"></div>
<div class="a" style="left:8px;top:662px;width:622px;height:19px;background:#3a3a3a;border-radius:10px"></div>
<svg style="left:18px;top:666px" width="10" height="11"><path d="M0.7 0.7 H9.3 L6 5 V10.3 M4 5 V10.3 M0.7 0.7 L4 5" fill="none" stroke="#c7c7c7" stroke-width="1.2"/></svg>
<div class="t dv" style="left:64px;top:666px">aj</div>
<svg style="left:607px;top:665px" width="12" height="12"><circle cx="6" cy="6" r="6" fill="#c7c7c7"/><path d="M3.6 3.6 L8.4 8.4 M8.4 3.6 L3.6 8.4" stroke="#3a3a3a" stroke-width="1.4"/></svg>
<div class="a" style="left:641px;top:665px;width:12px;height:12px;background:#7cacf8;border-radius:2px"></div>
<svg style="left:643px;top:667px" width="9" height="8"><path d="M1 4 L3.5 6.5 L8 1" fill="none" stroke="#1f1f1f" stroke-width="1.5"/></svg>
<div class="t dv" style="left:658px;top:666px">Invert</div>
<div class="a" style="left:700px;top:664px;width:1px;height:15px;background:#555"></div>
<div class="t dv" style="left:717px;top:666px">More filters</div>
<svg style="left:786px;top:670px" width="8" height="5"><path d="M0 0 H8 L4 4.5 Z" fill="#c7c7c7"/></svg>
<div class="chip" style="left:810px;width:23px">All</div>
<div class="a" style="left:838px;top:664px;width:1px;height:15px;background:#555"></div>
<div class="chip" style="left:842px;width:63px;background:#1c4a78;border-color:#1c4a78;color:#c2e2ff">Fetch/XHR</div>
<div class="chip" style="left:909px;width:31px">Doc</div>
<div class="chip" style="left:944px;width:30px">CSS</div>
<div class="chip" style="left:978px;width:21px">JS</div>
<div class="chip" style="left:1003px;width:33px">Font</div>
<div class="chip" style="left:1040px;width:30px">Img</div>
<div class="chip" style="left:1074px;width:42px">Media</div>
<div class="chip" style="left:1121px;width:54px">Manifest</div>
<div class="chip" style="left:1179px;width:43px">Socket</div>
<div class="chip" style="left:1226px;width:41px">Wasm</div>
<div class="chip" style="left:1271px;width:40px">Other</div>

<!-- settings -->
<div class="a" style="left:5px;top:684px;width:1582px;height:1px;background:#3a3a3a"></div>
<div class="a" style="left:10px;top:690px;width:10px;height:10px;border:1px solid #8a8a8a;border-radius:2px"></div>
<div class="t dv" style="left:25px;top:690px;font-size:12px">Big request rows</div>
<div class="a" style="left:10px;top:713px;width:10px;height:10px;background:#7cacf8;border-radius:2px"></div>
<svg style="left:11px;top:714px" width="9" height="8"><path d="M1 4 L3.5 6.5 L8 1" fill="none" stroke="#1f1f1f" stroke-width="1.4"/></svg>
<div class="t dv" style="left:25px;top:713px;font-size:12px">Overview</div>
<div class="a" style="left:812px;top:690px;width:10px;height:10px;border:1px solid #8a8a8a;border-radius:2px"></div>
<div class="t dv" style="left:827px;top:690px;font-size:12px">Group by frame</div>
<div class="a" style="left:812px;top:713px;width:10px;height:10px;border:1px solid #8a8a8a;border-radius:2px"></div>
<div class="t dv" style="left:827px;top:713px;font-size:12px">Screenshots</div>

<!-- overview -->
<div class="a" style="left:5px;top:729px;width:1582px;height:1px;background:#4a4a4a"></div>
<div class="a" style="left:6px;top:731px;width:2px;height:17px;background:#3b6fb6"></div>
<div class="a" style="left:5px;top:754px;width:1440px;height:2px;background:#434747"></div>
<div class="a" style="left:5px;top:805px;width:1582px;height:1px;background:#4a4a4a"></div>
<div class="vl" style="left:99px;top:730px;height:24px"></div>
<div class="vl" style="left:99px;top:756px;height:49px"></div>
<div class="t dv" style="left:9px;width:87px;text-align:right;top:735px;font-size:9.5px">20,000 ms</div>
<div class="vl" style="left:195px;top:730px;height:24px"></div>
<div class="vl" style="left:195px;top:756px;height:49px"></div>
<div class="t dv" style="left:105px;width:87px;text-align:right;top:735px;font-size:9.5px">40,000 ms</div>
<div class="vl" style="left:291px;top:730px;height:24px"></div>
<div class="vl" style="left:291px;top:756px;height:49px"></div>
<div class="t dv" style="left:201px;width:87px;text-align:right;top:735px;font-size:9.5px">60,000 ms</div>
<div class="vl" style="left:387px;top:730px;height:24px"></div>
<div class="vl" style="left:387px;top:756px;height:49px"></div>
<div class="t dv" style="left:297px;width:87px;text-align:right;top:735px;font-size:9.5px">80,000 ms</div>
<div class="vl" style="left:483px;top:730px;height:24px"></div>
<div class="vl" style="left:483px;top:756px;height:49px"></div>
<div class="t dv" style="left:393px;width:87px;text-align:right;top:735px;font-size:9.5px">100,000 ms</div>
<div class="vl" style="left:579px;top:730px;height:24px"></div>
<div class="vl" style="left:579px;top:756px;height:49px"></div>
<div class="t dv" style="left:489px;width:87px;text-align:right;top:735px;font-size:9.5px">120,000 ms</div>
<div class="vl" style="left:675px;top:730px;height:24px"></div>
<div class="vl" style="left:675px;top:756px;height:49px"></div>
<div class="t dv" style="left:585px;width:87px;text-align:right;top:735px;font-size:9.5px">140,000 ms</div>
<div class="vl" style="left:771px;top:730px;height:24px"></div>
<div class="vl" style="left:771px;top:756px;height:49px"></div>
<div class="t dv" style="left:681px;width:87px;text-align:right;top:735px;font-size:9.5px">160,000 ms</div>
<div class="vl" style="left:866px;top:730px;height:24px"></div>
<div class="vl" style="left:866px;top:756px;height:49px"></div>
<div class="t dv" style="left:776px;width:87px;text-align:right;top:735px;font-size:9.5px">180,000 ms</div>
<div class="vl" style="left:962px;top:730px;height:24px"></div>
<div class="vl" style="left:962px;top:756px;height:49px"></div>
<div class="t dv" style="left:872px;width:87px;text-align:right;top:735px;font-size:9.5px">200,000 ms</div>
<div class="vl" style="left:1058px;top:730px;height:24px"></div>
<div class="vl" style="left:1058px;top:756px;height:49px"></div>
<div class="t dv" style="left:968px;width:87px;text-align:right;top:735px;font-size:9.5px">220,000 ms</div>
<div class="vl" style="left:1154px;top:730px;height:24px"></div>
<div class="vl" style="left:1154px;top:756px;height:49px"></div>
<div class="t dv" style="left:1064px;width:87px;text-align:right;top:735px;font-size:9.5px">240,000 ms</div>
<div class="vl" style="left:1250px;top:730px;height:24px"></div>
<div class="vl" style="left:1250px;top:756px;height:49px"></div>
<div class="t dv" style="left:1160px;width:87px;text-align:right;top:735px;font-size:9.5px">260,000 ms</div>
<div class="vl" style="left:1346px;top:730px;height:24px"></div>
<div class="vl" style="left:1346px;top:756px;height:49px"></div>
<div class="t dv" style="left:1256px;width:87px;text-align:right;top:735px;font-size:9.5px">280,000 ms</div>
<div class="vl" style="left:1442px;top:730px;height:24px"></div>
<div class="vl" style="left:1442px;top:756px;height:49px"></div>
<div class="t dv" style="left:1352px;width:87px;text-align:right;top:735px;font-size:9.5px">300,000 ms</div>
<div class="vl" style="left:1538px;top:730px;height:24px"></div>
<div class="vl" style="left:1538px;top:756px;height:49px"></div>
<div class="t dv" style="left:1448px;width:87px;text-align:right;top:735px;font-size:9.5px">320,000 ms</div>
<div class="t dv" style="left:1583px;top:735px;font-size:9.5px">3</div>

<div class="a" style="left:1444px;top:757px;width:9px;height:2px;background:#7cacf8"></div>

<!-- table -->
<div class="a" style="left:5px;top:806px;width:1582px;height:25px;background:#2a2b2e"></div>
<div class="a" style="left:5px;top:831px;width:1582px;height:1px;background:#4a4a4a"></div>
<div class="a" style="left:5px;top:832px;width:1582px;height:83px;background:#1f1f1f"></div>
<div class="a" style="left:5px;top:909px;width:1582px;height:1px;background:#242424"></div>
<div class="a" style="left:6px;top:910px;width:1581px;height:5px;background:#111;border-top-left-radius:6px"></div>
<div class="vl" style="left:609px;top:806px;height:103px"></div>
<div class="vl" style="left:892px;top:806px;height:103px"></div>
<div class="vl" style="left:1099px;top:806px;height:103px"></div>
<div class="vl" style="left:1396px;top:806px;height:103px"></div>
<div class="vl" style="left:1575px;top:806px;height:103px"></div>
<div class="t dv" style="left:8px;top:812px;font-size:12px">Name</div>
<div class="t dv" style="left:614px;top:812px;font-size:12px">Status</div>
<div class="t dv" style="left:896px;top:812px;font-size:12px">Type</div>
<div class="t dv" style="left:1103px;top:812px;font-size:12px">Initiator</div>
<div class="t dv" style="left:1400px;top:812px;font-size:12px">Size</div>
<div class="t dv" style="left:1579px;top:812px;font-size:12px">Ti</div>
<svg style="left:9px;top:836px" width="12" height="12"><circle cx="6" cy="6" r="6" fill="#e46962"/><path d="M3.6 3.6 L8.4 8.4 M8.4 3.6 L3.6 8.4" stroke="#1f1f1f" stroke-width="1.4"/></svg>
<div class="t" style="left:25px;top:836px;color:#f2b8b5;font-size:11px">querySRRBBTJKS</div>
<div class="t" style="left:614px;top:836px;color:#f2b8b5;font-size:11.5px">(canceled)</div>
<div class="t" style="left:896px;top:836px;color:#f2b8b5;font-size:11.5px">xhr</div>
<div class="t" style="left:1103px;top:836px;color:#f2b8b5;font-size:11.5px;text-decoration:underline">spread.js:25</div>
<div class="t" style="left:1537px;top:836px;color:#f2b8b5;font-size:11.5px">0.0 kB</div>
<div class="t" style="left:1579px;top:836px;color:#f2b8b5;font-size:11.5px">5</div>
</body></html>
